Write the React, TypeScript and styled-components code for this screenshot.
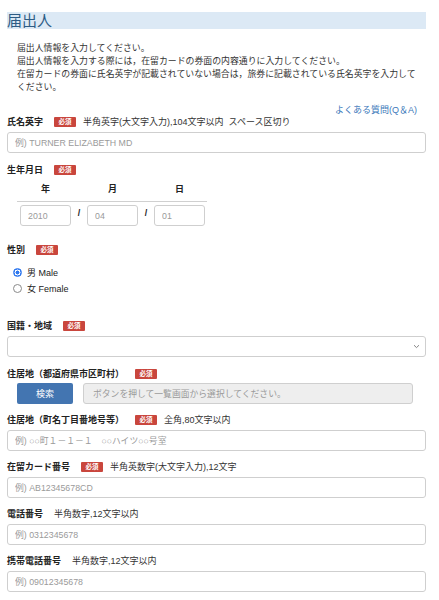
import { createGlobalStyle, styled } from "styled-components";

const GlobalStyle = createGlobalStyle`
  body {
    margin: 0;
    background: #fff;
    font-family: "Liberation Sans", "Noto Sans CJK JP", sans-serif;
    color: #222;
  }
  * { box-sizing: border-box; }
`;

const Page = styled.div`
  padding: 12px 13px 20px 7px;
  width: 439px;
`;

const SectionTitle = styled.h2`
  margin: 0;
  height: 17px;
  background: #dce9f5;
  color: #2d5c85;
  font-size: 15px;
  font-weight: 400;
  line-height: 17px;
`;

const Intro = styled.p`
  margin: 13px 0 0;
  padding-left: 10px;
  width: 414px;
  font-size: 8.9px;
  line-height: 13px;
  color: #333;
`;

const HelpLink = styled.a`
  display: block;
  margin-top: 10px;
  padding-right: 9px;
  text-align: right;
  font-size: 9px;
  line-height: 12px;
  color: #3b78ba;
  text-decoration: none;
`;

const Field = styled.div<{ $gap?: number }>`
  margin-bottom: ${(p) => p.$gap ?? 10}px;
`;

const LabelRow = styled.div`
  display: flex;
  align-items: center;
  height: 12px;
  font-size: 9px;
  line-height: 12px;
`;

const Label = styled.span`
  font-weight: 700;
  color: #222;
  margin-right: 11px;
`;

const Badge = styled.span`
  display: inline-flex;
  align-items: center;
  justify-content: center;
  width: 22px;
  height: 10px;
  margin-right: 7px;
  border-radius: 1px;
  background: #c9463d;
  color: #fff;
  font-size: 6.5px;
  font-weight: 700;
`;

const Note = styled.span`
  color: #333;
`;

const TextInput = styled.input<{ $width?: number }>`
  display: block;
  width: ${(p) => (p.$width ? `${p.$width}px` : "100%")};
  height: 21px;
  margin-top: 4px;
  padding: 0 7px;
  border: 1px solid #cfcfcf;
  border-radius: 3px;
  background: #fff;
  font-family: inherit;
  font-size: 8.8px;
  color: #333;
  &::placeholder {
    color: #9a9a9a;
  }
`;

const SelectBox = styled.div`
  display: flex;
  align-items: center;
  justify-content: flex-end;
  height: 21px;
  margin-top: 4px;
  padding-right: 5px;
  border: 1px solid #cfcfcf;
  border-radius: 3px;
  background: #fff;
`;

const DateTable = styled.div`
  width: 190px;
  margin-left: 10px;
`;

const DateGrid = styled.div<{ $head?: boolean }>`
  display: grid;
  grid-template-columns: 51px 16px 51px 16px 51px;
  padding: 0 3px;
  height: ${(p) => (p.$head ? "26px" : "21px")};
  align-items: ${(p) => (p.$head ? "center" : "start")};
  border-bottom: ${(p) => (p.$head ? "1px solid #d0d0d0" : "none")};
  margin-top: ${(p) => (p.$head ? "0" : "3px")};
`;

const DateHead = styled.span`
  text-align: center;
  font-size: 9px;
  font-weight: 700;
  color: #222;
`;

const DateInput = styled(TextInput)`
  margin-top: 0;
  width: 51px;
`;

const Slash = styled.span`
  text-align: center;
  font-size: 9px;
  font-weight: 700;
  line-height: 12px;
  padding-top: 2px;
`;

const RadioList = styled.div`
  margin-top: 8px;
  padding-left: 6px;
`;

const RadioItem = styled.label`
  display: flex;
  align-items: center;
  gap: 5px;
  height: 16px;
  font-size: 9px;
  color: #222;
`;

const Radio = styled.input`
  appearance: none;
  margin: 0;
  width: 9px;
  height: 9px;
  border-radius: 50%;
  border: 1px solid #8a8a8a;
  background: #fff;
  &:checked {
    border-color: #2f78ef;
    background: radial-gradient(circle, #2f78ef 0 1.8px, #fff 2.2px 2.8px, #2f78ef 3.2px);
  }
`;

const AddressRow = styled.div`
  display: flex;
  gap: 10px;
  margin-top: 3px;
  padding: 0 13px 0 10px;
`;

const SearchButton = styled.button`
  width: 56px;
  height: 21px;
  border: none;
  border-radius: 2px;
  background: #4375b1;
  color: #fff;
  font-family: inherit;
  font-size: 9px;
`;

const ReadonlyInput = styled(TextInput)`
  flex: 1;
  margin-top: 0;
  background: #eeeeee;
  padding-left: 9px;
`;

function Chevron() {
  return (
    <svg width="7" height="5" viewBox="0 0 7 5">
      <path d="M1 1.2 L3.5 3.6 L6 1.2" fill="none" stroke="#777" strokeWidth="0.9" />
    </svg>
  );
}

export default function App() {
  return (
    <>
      <GlobalStyle />
      <Page>
        <SectionTitle>届出人</SectionTitle>
        <Intro>
          届出人情報を入力してください。
          <br />
          届出人情報を入力する際には，在留カードの券面の内容通りに入力してください。
          <br />
          在留カードの券面に氏名英字が記載されていない場合は，旅券に記載されている氏名英字を入力してください。
        </Intro>
        <HelpLink href="#">よくある質問(Q＆A)</HelpLink>

        <Field $gap={11}>
          <LabelRow>
            <Label>氏名英字</Label>
            <Badge>必須</Badge>
            <Note>半角英字(大文字入力),104文字以内&nbsp;&nbsp;スペース区切り</Note>
          </LabelRow>
          <TextInput placeholder="例) TURNER ELIZABETH MD" />
        </Field>

        <Field $gap={18}>
          <LabelRow>
            <Label>生年月日</Label>
            <Badge>必須</Badge>
          </LabelRow>
          <DateTable>
            <DateGrid $head>
              <DateHead>年</DateHead>
              <span />
              <DateHead>月</DateHead>
              <span />
              <DateHead>日</DateHead>
            </DateGrid>
            <DateGrid>
              <DateInput placeholder="2010" />
              <Slash>/</Slash>
              <DateInput placeholder="04" />
              <Slash>/</Slash>
              <DateInput placeholder="01" />
            </DateGrid>
          </DateTable>
        </Field>

        <Field $gap={24}>
          <LabelRow>
            <Label>性別</Label>
            <Badge>必須</Badge>
          </LabelRow>
          <RadioList>
            <RadioItem>
              <Radio type="radio" name="sex" defaultChecked />
              男 Male
            </RadioItem>
            <RadioItem>
              <Radio type="radio" name="sex" />
              女 Female
            </RadioItem>
          </RadioList>
        </Field>

        <Field $gap={11}>
          <LabelRow>
            <Label>国籍・地域</Label>
            <Badge>必須</Badge>
          </LabelRow>
          <SelectBox>
            <Chevron />
          </SelectBox>
        </Field>

        <Field>
          <LabelRow>
            <Label>住居地（都道府県市区町村）</Label>
            <Badge>必須</Badge>
          </LabelRow>
          <AddressRow>
            <SearchButton type="button">検索</SearchButton>
            <ReadonlyInput readOnly placeholder="ボタンを押して一覧画面から選択してください。" />
          </AddressRow>
        </Field>

        <Field>
          <LabelRow>
            <Label>住居地（町名丁目番地号等）</Label>
            <Badge>必須</Badge>
            <Note>全角,80文字以内</Note>
          </LabelRow>
          <TextInput placeholder="例) ○○町１－１－１　○○ハイツ○○号室" />
        </Field>

        <Field>
          <LabelRow>
            <Label>在留カード番号</Label>
            <Badge>必須</Badge>
            <Note>半角英数字(大文字入力),12文字</Note>
          </LabelRow>
          <TextInput placeholder="例) AB12345678CD" />
        </Field>

        <Field>
          <LabelRow>
            <Label>電話番号</Label>
            <Note>半角数字,12文字以内</Note>
          </LabelRow>
          <TextInput placeholder="例) 0312345678" />
        </Field>

        <Field>
          <LabelRow>
            <Label>携帯電話番号</Label>
            <Note>半角数字,12文字以内</Note>
          </LabelRow>
          <TextInput placeholder="例) 09012345678" />
        </Field>
      </Page>
    </>
  );
}
